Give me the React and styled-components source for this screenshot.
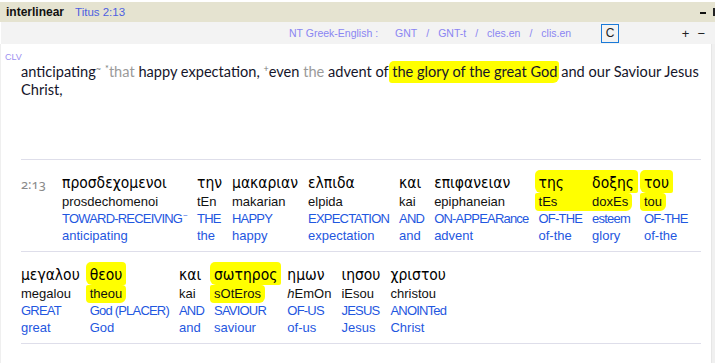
import React from "react";
import styled, { createGlobalStyle } from "styled-components";

const GlobalStyle = createGlobalStyle`
  html, body { margin: 0; padding: 0; background: #fff; overflow: hidden; }
  body { font-family: "Liberation Sans", Arial, sans-serif; }
  * { box-sizing: border-box; }
`;

const Window = styled.div`
  width: 715px;
  height: 363px;
  display: flex;
  flex-direction: column;
  padding-top: 2px;
  background: #fff;
  overflow: hidden;
`;

const TitleBar = styled.div`
  height: 20px;
  flex: none;
  background: #e5e3d0;
  display: flex;
  align-items: center;
  padding-left: 6px;
`;

const TitleText = styled.span`
  font-weight: bold;
  font-size: 12px;
  color: #111;
`;

const TitleRef = styled.span`
  font-size: 11.5px;
  color: #4d5fe0;
  margin-left: 11px;
`;

const WinControls = styled.div`
  margin-left: auto;
  display: flex;
  align-items: center;
  gap: 7px;
  padding-top: 2px;
`;

const MinDash = styled.span`
  display: block;
  width: 6px;
  height: 2px;
  background: #111;
`;

const CutButton = styled.span`
  display: block;
  width: 2px;
  height: 8px;
  border-left: 2px solid #222;
  margin-top: -2px;
`;

const Toolbar = styled.div`
  height: 22px;
  flex: none;
  background: #f3f3f3;
  display: flex;
  align-items: center;
  padding-left: 288px;
  padding-right: 10px;
  margin-left: 1px;
  font-size: 10.5px;
  color: #8a85f2;
`;

const SourceLabel = styled.span`
  margin-right: 17px;
`;

const Sep = styled.span`
  margin: 0 9px;
`;

const CButton = styled.div`
  width: 18px;
  height: 19px;
  border: 1px solid #1a7ad8;
  margin-left: 30px;
  display: flex;
  align-items: center;
  justify-content: center;
  font-size: 12px;
  color: #222;
`;

const ZoomGroup = styled.div`
  margin-left: auto;
  display: flex;
  gap: 8px;
  font-size: 13px;
  color: #222;
`;

const Body = styled.div`
  flex: 1;
  display: flex;
  min-height: 0;
`;

const Content = styled.div`
  flex: 1;
  border-left: 1px solid #efefef;
  padding: 8px 10px 0 4px;
`;

const ScrollStrip = styled.div`
  width: 4px;
  background: #f0f0f0;
  border-left: 1px solid #e6e6e6;
`;

const VersionTag = styled.div`
  font-family: "Liberation Sans", Arial, sans-serif;
  font-size: 9px;
  line-height: 11px;
  color: #9b8ff0;
`;

const Paragraph = styled.p`
  margin: 0 0 0 16px;
  font-family: Lato, "Open Sans", sans-serif;
  font-size: 14.6px;
  line-height: 17.5px;
  color: #15152a;
  white-space: nowrap;
`;

const Faint = styled.span`
  color: #9a9a9a;
`;

const Mark = styled.sup`
  font-size: 9px;
  color: #7a7a7a;
  vertical-align: 5px;
  line-height: 0;
  margin-right: ${(p) => p.$mr || 0}px;
`;

const Highlight = styled.span`
  background: #ffff00;
  padding: 2px 2px 3px 3px;
  margin: 0 -2px 0 -3px;
  border-radius: 5px 3px 6px 3px;
`;

const Interlinear = styled.div`
  margin: 61px 0 0 16px;
`;

const Row = styled.div`
  display: flex;
  align-items: flex-start;
  gap: 10px;
  border-top: 1px solid #dedeea;
  padding: 13px 0 6px;
  &:last-child { border-bottom: 1px solid #dedeea; }
`;

const Ref = styled.div`
  width: 31px;
  font-family: "Noto Sans", sans-serif;
  font-variant-numeric: oldstyle-nums;
  font-size: 13px;
  line-height: 20px;
  padding-top: 1px;
  color: #8a8a8a;
`;

const Cell = styled.div`
  display: flex;
  flex-direction: column;
  align-items: flex-start;
  white-space: nowrap;
`;

const Greek = styled.span`
  font-family: "DejaVu Sans Condensed", "DejaVu Sans", sans-serif;
  font-stretch: condensed;
  font-size: 15.5px;
  line-height: 20px;
  color: #000;
  ${(p) =>
    p.$hl &&
    `
    background: #ffff00;
    padding: 3px 4px 0;
    margin: -3px -4px 0;
    border-radius: 5px 4px 2px 6px;
  `}
  ${(p) =>
    p.$join &&
    `
    align-self: stretch;
    margin-right: -14px;
    padding-right: 14px;
  `}
`;

const Translit = styled.span`
  font-size: 13px;
  line-height: 17px;
  color: #111;
  ${(p) =>
    p.$hl &&
    `
    background: #ffff00;
    padding: 0 4px 1px;
    margin: 0 -4px -1px;
    border-radius: 2px 4px 6px 4px;
  `}
  ${(p) =>
    p.$join &&
    `
    align-self: stretch;
    margin-right: -14px;
    padding-right: 14px;
  `}
`;

const Gloss = styled.span`
  font-size: 13px;
  line-height: 17px;
  color: #1f57e0;
  letter-spacing: -0.8px;
`;

const LowerGloss = styled(Gloss)`
  line-height: 18px;
  letter-spacing: 0;
`;

const Tilde = styled.sup`
  font-size: 8px;
  vertical-align: 5px;
  line-height: 0;
  margin-left: 1px;
`;

const row1 = [
  { g: "προσδεχομενοι", t: "prosdechomenoi", u: <>TOWARD-RECEIVING<Tilde>~</Tilde></>, l: "anticipating" },
  { g: "την", t: "tEn", u: "THE", l: "the" },
  { g: "μακαριαν", t: "makarian", u: "HAPPY", l: "happy" },
  { g: "ελπιδα", t: "elpida", u: "EXPECTATION", l: "expectation" },
  { g: "και", t: "kai", u: "AND", l: "and" },
  { g: "επιφανειαν", t: "epiphaneian", u: "ON-APPEARance", l: "advent" },
  { g: "της", t: "tEs", u: "OF-THE", l: "of-the", hl: true, join: true },
  { g: "δοξης", t: "doxEs", u: "esteem", l: "glory", hl: true },
  { g: "του", t: "tou", u: "OF-THE", l: "of-the", hl: true },
];

const row2 = [
  { g: "μεγαλου", t: "megalou", u: "GREAT", l: "great" },
  { g: "θεου", t: "theou", u: "God (PLACER)", l: "God", hl: true },
  { g: "και", t: "kai", u: "AND", l: "and" },
  { g: "σωτηρος", t: "sOtEros", u: "SAVIOUR", l: "saviour", hl: true },
  { g: "ημων", t: <><i>h</i>EmOn</>, u: "OF-US", l: "of-us" },
  { g: "ιησου", t: "iEsou", u: "JESUS", l: "Jesus" },
  { g: "χριστου", t: "christou", u: "ANOINTed", l: "Christ" },
];

function Word({ w }) {
  return (
    <Cell>
      <Greek $hl={w.hl} $join={w.join}>{w.g}</Greek>
      <Translit $hl={w.hl} $join={w.join}>{w.t}</Translit>
      <Gloss>{w.u}</Gloss>
      <LowerGloss>{w.l}</LowerGloss>
    </Cell>
  );
}

export default function App() {
  return (
    <>
      <GlobalStyle />
      <Window>
        <TitleBar>
          <TitleText>interlinear</TitleText>
          <TitleRef>Titus 2:13</TitleRef>
          <WinControls>
            <MinDash />
            <CutButton />
          </WinControls>
        </TitleBar>
        <Toolbar>
          <SourceLabel>NT Greek-English :</SourceLabel>
          <span>GNT</span>
          <Sep>/</Sep>
          <span>GNT-t</span>
          <Sep>/</Sep>
          <span>cles.en</span>
          <Sep>/</Sep>
          <span>clis.en</span>
          <CButton>C</CButton>
          <ZoomGroup>
            <span>+</span>
            <span>−</span>
          </ZoomGroup>
        </Toolbar>
        <Body>
          <Content>
            <VersionTag>CLV</VersionTag>
            <Paragraph>
              anticipating<Mark $mr={4}>~</Mark>
              <Mark>*</Mark>
              <Faint>that</Faint> happy expectation, <Mark>+</Mark>even{" "}
              <Faint>the</Faint> advent of{" "}
              <Highlight>the glory of the great God</Highlight> and our Saviour Jesus
              <br />
              Christ,
            </Paragraph>
            <Interlinear>
              <Row>
                <Ref>2:13</Ref>
                {row1.map((w, i) => (
                  <Word key={i} w={w} />
                ))}
              </Row>
              <Row>
                {row2.map((w, i) => (
                  <Word key={i} w={w} />
                ))}
              </Row>
            </Interlinear>
          </Content>
          <ScrollStrip />
        </Body>
      </Window>
    </>
  );
}
